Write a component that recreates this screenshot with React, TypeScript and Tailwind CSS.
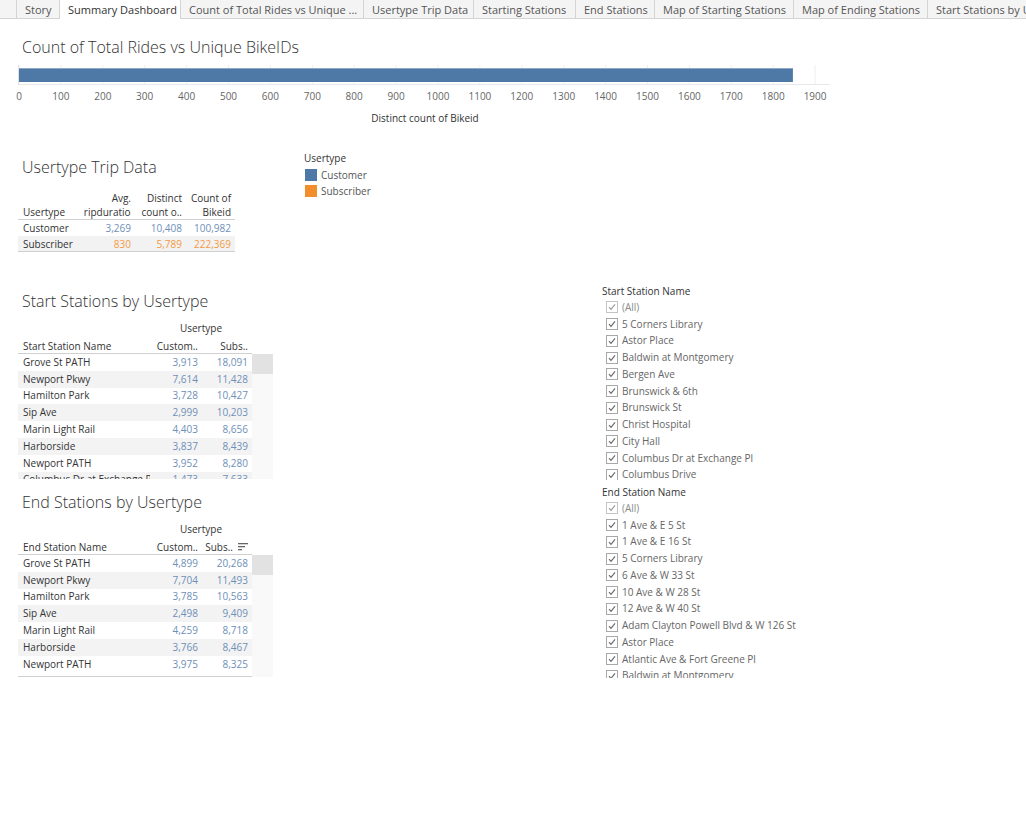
const tabs = [
  { label: "Story", w: "w-[43px]" },
  { label: "Summary Dashboard", w: "w-[121px]", active: true },
  { label: "Count of Total Rides vs Unique ...", w: "w-[183px]" },
  { label: "Usertype Trip Data", w: "w-[110px]" },
  { label: "Starting Stations", w: "w-[102px]" },
  { label: "End Stations", w: "w-[79px]" },
  { label: "Map of Starting Stations", w: "w-[139px]" },
  { label: "Map of Ending Stations", w: "w-[134px]" },
  { label: "Start Stations by Usertype", w: "w-[120px]" },
];

const startRows = [
  ["Grove St PATH", "3,913", "18,091"],
  ["Newport Pkwy", "7,614", "11,428"],
  ["Hamilton Park", "3,728", "10,427"],
  ["Sip Ave", "2,999", "10,203"],
  ["Marin Light Rail", "4,403", "8,656"],
  ["Harborside", "3,837", "8,439"],
  ["Newport PATH", "3,952", "8,280"],
  ["Columbus Dr at Exchange Pl", "1,473", "7,633"],
];

const endRows = [
  ["Grove St PATH", "4,899", "20,268"],
  ["Newport Pkwy", "7,704", "11,493"],
  ["Hamilton Park", "3,785", "10,563"],
  ["Sip Ave", "2,498", "9,409"],
  ["Marin Light Rail", "4,259", "8,718"],
  ["Harborside", "3,766", "8,467"],
  ["Newport PATH", "3,975", "8,325"],
];

const startFilter = [
  "(All)",
  "5 Corners Library",
  "Astor Place",
  "Baldwin at Montgomery",
  "Bergen Ave",
  "Brunswick & 6th",
  "Brunswick St",
  "Christ Hospital",
  "City Hall",
  "Columbus Dr at Exchange Pl",
  "Columbus Drive",
];

const endFilter = [
  "(All)",
  "1 Ave & E 5 St",
  "1 Ave & E 16 St",
  "5 Corners Library",
  "6 Ave & W 33 St",
  "10 Ave & W 28 St",
  "12 Ave & W 40 St",
  "Adam Clayton Powell Blvd & W 126 St",
  "Astor Place",
  "Atlantic Ave & Fort Greene Pl",
  "Baldwin at Montgomery",
];

const ticks = Array.from({ length: 20 }, (_, i) => i * 100);
const scale = 41.9 / 100;

function TabBar() {
  return (
    <div className="flex h-[19px] border-b border-[#d4d4d4] bg-[#f4f4f4] text-[11px] text-[#555]">
      <div className="w-[16px] shrink-0" />
      {tabs.map((t) => (
        <div
          key={t.label}
          className={`${t.w} shrink-0 overflow-hidden whitespace-nowrap border-l border-[#d4d4d4] px-[8px] leading-[19px] ${
            t.active ? "h-[19px] bg-white text-[#333]" : ""
          }`}
        >
          {t.label}
        </div>
      ))}
    </div>
  );
}

function RidesChart() {
  return (
    <div>
      <div className="pl-[22px] pt-[17px] text-[16px] font-light leading-[22px] text-[#333]">
        Count of Total Rides vs Unique BikeIDs
      </div>
      <svg width="840" height="47" className="block">
        {ticks.map((t) => (
          <line key={t} x1={19 + t * scale} x2={19 + t * scale} y1={7} y2={27} stroke="#efefef" />
        ))}
        <line x1={18} x2={830} y1={26.5} y2={26.5} stroke="#e8e8e8" />
        <line x1={18.5} x2={18.5} y1={7} y2={27} stroke="#e0e0e0" />
        <rect x={19} y={10} width={1847 * scale} height={14} fill="#4e79a7" />
        <rect x={19} y={10} width={1847 * scale} height={1} fill="#8ea8c6" />
        {ticks.map((t) => (
          <text
            key={t}
            x={19 + t * scale}
            y={41.5}
            fontSize="10"
            fill="#666"
            textAnchor="middle"
            fontFamily="Open Sans, sans-serif"
          >
            {t}
          </text>
        ))}
      </svg>
      <div className="mt-[6px] w-[850px] text-center text-[10px] leading-[14px] text-[#333]">
        Distinct count of Bikeid
      </div>
    </div>
  );
}

function UsertypeTable() {
  return (
    <div>
      <div className="mt-[31px] pl-[4px] text-[16px] font-light leading-[22px] text-[#333]">Usertype Trip Data</div>
      <div className="mt-[13px] w-[217px] text-[10px] leading-[14px]">
        <div className="grid grid-cols-[66px_48px_51px_52px] border-b border-[#d0d0d0] text-[#333]">
          <div className="flex items-end pl-[5px]">Usertype</div>
          <div className="flex flex-col items-end pr-[1px]">
            <span>Avg.</span>
            <div className="flex w-full justify-center overflow-hidden whitespace-nowrap">Tripduration</div>
          </div>
          <div className="flex flex-col items-end overflow-hidden whitespace-nowrap pr-[1px]">
            <span>Distinct</span>
            <span>count o..</span>
          </div>
          <div className="flex flex-col items-end pr-[4px]">
            <span>Count of</span>
            <span>Bikeid</span>
          </div>
        </div>
        <div className="grid h-[16px] grid-cols-[66px_48px_51px_52px] items-center">
          <div className="pl-[5px] text-[#333]">Customer</div>
          <div className="pr-[1px] text-right text-[#6f8fb8]">3,269</div>
          <div className="pr-[1px] text-right text-[#6f8fb8]">10,408</div>
          <div className="pr-[4px] text-right text-[#6f8fb8]">100,982</div>
        </div>
        <div className="grid h-[16px] grid-cols-[66px_48px_51px_52px] items-center border-b border-[#d0d0d0] bg-[#f2f2f2]">
          <div className="pl-[5px] text-[#333]">Subscriber</div>
          <div className="pr-[1px] text-right text-[#f39a45]">830</div>
          <div className="pr-[1px] text-right text-[#f39a45]">5,789</div>
          <div className="pr-[4px] text-right text-[#f39a45]">222,369</div>
        </div>
      </div>
    </div>
  );
}

function SortIcon() {
  return (
    <svg width="10" height="9" className="ml-[5px]">
      <rect x="0" y="0" width="10" height="1.3" fill="#666" />
      <rect x="0" y="3" width="7" height="1.3" fill="#666" />
      <rect x="0" y="6" width="4" height="1.3" fill="#666" />
    </svg>
  );
}

function StationTable({
  title,
  nameHeader,
  rows,
  bodyHeight,
  sorted,
  titleGap,
}: {
  title: string;
  nameHeader: string;
  rows: string[][];
  bodyHeight: string;
  sorted?: boolean;
  titleGap: string;
}) {
  return (
    <div>
      <div className={`${titleGap} pl-[4px] text-[16px] font-light leading-[22px] text-[#333]`}>{title}</div>
      <div className="mt-[9px] w-[234px] text-[10px] leading-[14px] text-[#333]">
        <div className="ml-[132px] w-[102px] text-center">Usertype</div>
        <div className="mt-[4px] flex h-[15px] items-center border-b border-[#d0d0d0]">
          <div className="w-[132px] pl-[5px]">{nameHeader}</div>
          <div className="w-[50px] pr-[2px] text-right">Custom..</div>
          <div className="flex w-[52px] items-center justify-end pr-[4px]">
            <span>Subs..</span>
            {sorted && <SortIcon />}
          </div>
        </div>
      </div>
      <div className={`flex ${bodyHeight} overflow-hidden`}>
        <div className={`w-[234px] text-[10px] ${sorted ? "border-b border-[#d0d0d0]" : ""}`}>
          {rows.map((r, i) => (
            <div key={r[0]} className={`flex h-[16.8px] items-center ${i % 2 === 1 ? "bg-[#f3f3f3]" : "bg-white"}`}>
              <div className="w-[132px] overflow-hidden whitespace-nowrap pl-[5px] text-[#333]">{r[0]}</div>
              <div className="w-[50px] pr-[2px] text-right text-[#6f8fb8]">{r[1]}</div>
              <div className="w-[52px] pr-[4px] text-right text-[#6f8fb8]">{r[2]}</div>
            </div>
          ))}
        </div>
        <div className="w-[21px] bg-[#f9f9f9]">
          <div className="h-[20px] bg-[#e2e2e2]" />
        </div>
      </div>
    </div>
  );
}

function Checkbox({ dim }: { dim?: boolean }) {
  return (
    <svg width="12" height="12" className="shrink-0">
      <rect x="0.5" y="0.5" width="11" height="11" fill="white" stroke={dim ? "#c4c4c4" : "#a8a8a8"} />
      <polyline points="3,6.2 5,8.4 9,3.4" fill="none" stroke={dim ? "#9a9a9a" : "#666"} strokeWidth="1.1" />
    </svg>
  );
}

function FilterList({ title, items, height }: { title: string; items: string[]; height: string }) {
  return (
    <div className={`${height} overflow-hidden text-[10px]`}>
      <div className="h-[15px] leading-[14px] text-[#333]">{title}</div>
      {items.map((it, i) => (
        <div key={it} className="flex h-[16.75px] items-center gap-[4px] pl-[4px] whitespace-nowrap text-[#666]">
          <Checkbox dim={i === 0} />
          <span className={i === 0 ? "text-[#8a8a8a]" : ""}>{it}</span>
        </div>
      ))}
    </div>
  );
}

export default function App() {
  return (
    <div className="h-[821px] w-[1026px] overflow-hidden bg-white font-['Open_Sans',sans-serif] text-[#333]">
      <TabBar />
      <RidesChart />
      <div className="flex">
        <div className="ml-[18px] w-[260px]">
          <UsertypeTable />
          <StationTable
            title="Start Stations by Usertype"
            nameHeader="Start Station Name"
            rows={startRows}
            bodyHeight="h-[125px]"
            titleGap="mt-[38px]"
          />
          <StationTable
            title="End Stations by Usertype"
            nameHeader="End Station Name"
            rows={endRows}
            bodyHeight="h-[122px]"
            sorted
            titleGap="mt-[12px]"
          />
        </div>
        <div className="ml-[26px] w-[298px] pt-[26px] text-[10px]">
          <div className="leading-[14px] text-[#333]">Usertype</div>
          <div className="mt-[2px] flex h-[16px] items-center gap-[4px] pl-[1px] text-[#555]">
            <div className="h-[12px] w-[12px] bg-[#4e79a7]" />
            Customer
          </div>
          <div className="flex h-[16px] items-center gap-[4px] pl-[1px] text-[#555]">
            <div className="h-[12px] w-[12px] bg-[#f28e2b]" />
            Subscriber
          </div>
        </div>
        <div className="w-[300px] pt-[159px]">
          <FilterList title="Start Station Name" items={startFilter} height="h-[196px]" />
          <div className="mt-[5px]">
            <FilterList title="End Station Name" items={endFilter} height="h-[193px]" />
          </div>
        </div>
      </div>
    </div>
  );
}
